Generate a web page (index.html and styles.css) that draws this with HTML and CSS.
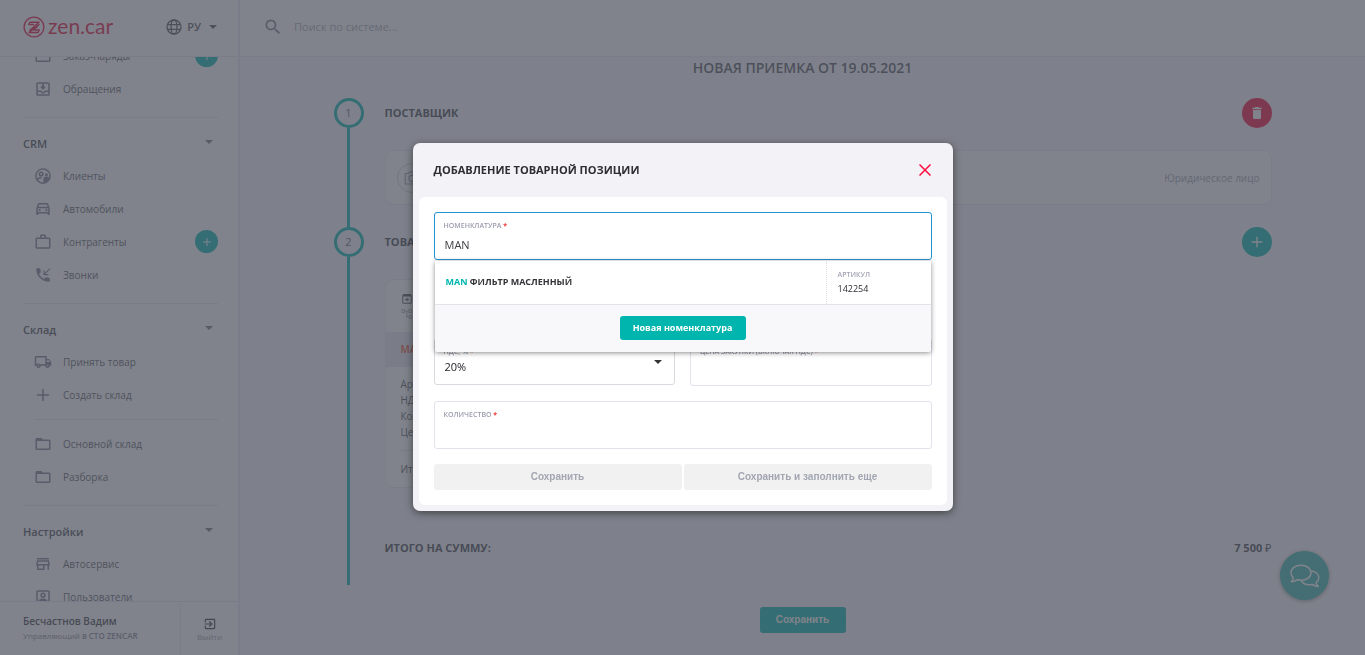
FILE: index.html
```html
<!DOCTYPE html>
<html lang="ru">
<head>
<meta charset="utf-8">
<title>Новая приемка — zen.car</title>
<meta name="viewport" content="width=device-width, initial-scale=1">
<link rel="stylesheet" href="styles.css">
</head>
<body>
<svg class="sprite" aria-hidden="true">
  <symbol id="i-orders" viewBox="0 0 24 24"><path d="M20 6h-8l-2-2H4a2 2 0 0 0-2 2v12a2 2 0 0 0 2 2h16a2 2 0 0 0 2-2V8a2 2 0 0 0-2-2zm0 12H4V8h16z"/></symbol>
  <symbol id="i-inbox" viewBox="0 0 24 24"><path d="M16 9h-2.500V5.500h-3V9H8l4 4 4-4zm3-6H5a2 2 0 0 0-2 2v14c0 1.100.9 2 2 2h14a2 2 0 0 0 2-2V5a2 2 0 0 0-2-2zm0 16H5v-3h3.560c.69 1.190 1.970 2 3.450 2s2.750-.81 3.450-2H19v3zm0-5h-4.990c0 1.100-.9 2-2 2s-2-.9-2-2H5V5h14v9z"/></symbol>
  <symbol id="i-clients" viewBox="0 0 24 24"><path fill-rule="evenodd" d="M12 1.500a10.500 10.500 0 1 0 0 21 10.500 10.500 0 0 0 0-21zM12 3.500a8.500 8.500 0 0 1 8.300 10.200c-1-.7-2.500-1-3.800-1-2.700 0-4 1.600-4 3v4.800A8.500 8.500 0 0 1 5 16.800c1-.8 2.600-1.300 4.200-1.300l1.800-1.800c-3-.3-5.500.3-7 1.300A8.500 8.500 0 0 1 12 3.500zM9.500 6a3.400 3.400 0 1 0 0 6.800 3.400 3.400 0 0 0 0-6.800zm0 2a1.400 1.400 0 1 1 0 2.800 1.400 1.400 0 0 1 0-2.800zm7 .3a2 2 0 1 0 0 4 2 2 0 0 0 0-4z"/></symbol>
  <symbol id="i-car" viewBox="0 0 24 24"><path d="M18.920 5.010C18.720 4.420 18.160 4 17.500 4h-11c-.66 0-1.210.42-1.420 1.010L3 11v8c0 .55.45 1 1 1h1c.55 0 1-.45 1-1v-1h12v1c0 .55.45 1 1 1h1c.55 0 1-.45 1-1v-8l-2.080-5.990zM6.850 6h10.290l1.080 3.110H5.770L6.850 6zM19 16H5v-5h14v5z"/><circle cx="7.500" cy="13.500" r="1.500"/><circle cx="16.500" cy="13.500" r="1.500"/></symbol>
  <symbol id="i-case" viewBox="0 0 24 24"><path d="M14 6V4h-4v2h4zM4 8v11h16V8H4zm16-2c1.110 0 2 .89 2 2v11c0 1.110-.89 2-2 2H4c-1.110 0-2-.89-2-2V8c0-1.110.89-2 2-2h4V4c0-1.110.89-2 2-2h4c1.110 0 2 .89 2 2v2h4z"/></symbol>
  <symbol id="i-call" viewBox="0 0 24 24"><path d="M20 15.500c-1.250 0-2.450-.2-3.570-.57a1.020 1.020 0 0 0-1.020.24l-2.200 2.200a15.070 15.070 0 0 1-6.590-6.580l2.200-2.210c.28-.27.36-.66.25-1.010A11.360 11.360 0 0 1 8.500 4c0-.55-.45-1-1-1H4c-.55 0-1 .45-1 1 0 9.390 7.610 17 17 17 .55 0 1-.45 1-1v-3.500c0-.55-.45-1-1-1zM20.600 3l-6.600 6.600V5.500h-1.500v6.700h6.700v-1.500h-4.100L21.700 4z"/></symbol>
  <symbol id="i-truck" viewBox="0 0 24 24"><path d="M20 8h-3V4H3c-1.100 0-2 .9-2 2v11h2c0 1.660 1.340 3 3 3s3-1.340 3-3h6c0 1.660 1.340 3 3 3s3-1.340 3-3h2v-5l-3-4zm-.5 1.500l1.960 2.500H17V9.500h2.500zM6 18c-.55 0-1-.45-1-1s.45-1 1-1 1 .45 1 1-.45 1-1 1zm2.220-3c-.55-.61-1.330-1-2.220-1s-1.670.39-2.220 1H3V6h12v9H8.220zM18 18c-.55 0-1-.45-1-1s.45-1 1-1 1 .45 1 1-.45 1-1 1z"/></symbol>
  <symbol id="i-plus" viewBox="0 0 24 24"><path d="M20 13h-7v7h-2v-7H4v-2h7V4h2v7h7z"/></symbol>
  <symbol id="i-store" viewBox="0 0 24 24"><path d="M18.360 9l.6 3H5.040l.6-3h12.720M20 4H4v2h16V4zm0 3H4l-1 5v2h1v6h10v-6h4v6h2v-6h1v-2l-1-5zM6 18v-4h6v4H6z"/></symbol>
  <symbol id="i-user" viewBox="0 0 24 24"><path d="M19 3H5a2 2 0 0 0-2 2v14a2 2 0 0 0 2 2h14a2 2 0 0 0 2-2V5a2 2 0 0 0-2-2zm0 16H5V5h14zM12 6a3.500 3.500 0 1 0 0 7 3.500 3.500 0 0 0 0-7zm0 2a1.500 1.500 0 1 1 0 3 1.500 1.500 0 0 1 0-3zm0 6c-3 0-6 1.300-6 3.400V18h12v-.6c0-2.100-3-3.400-6-3.400z"/></symbol>
  <symbol id="i-exit" viewBox="0 0 24 24"><path d="M10.090 15.590L11.500 17l5-5-5-5-1.410 1.410L12.670 11H3v2h9.670l-2.580 2.590zM19 3H5a2 2 0 0 0-2 2v4h2V5h14v14H5v-4H3v4a2 2 0 0 0 2 2h14c1.100 0 2-.9 2-2V5c0-1.100-.9-2-2-2z"/></symbol>
  <symbol id="i-globe" viewBox="0 0 24 24"><g fill="none" stroke="currentColor" stroke-width="2"><circle cx="12" cy="12" r="10.500"/><ellipse cx="12" cy="12" rx="4.500" ry="10.500"/><path d="M2.500 8.500h19M2.500 15.500h19"/></g></symbol>
  <symbol id="i-search" viewBox="0 0 24 24"><path d="M15.500 14h-.79l-.28-.27A6.470 6.470 0 0 0 16 9.500 6.500 6.500 0 1 0 9.500 16c1.610 0 3.090-.59 4.230-1.570l.27.28v.79l5 4.990L20.490 19l-4.990-5zm-6 0C7.010 14 5 11.990 5 9.500S7.010 5 9.500 5 14 7.010 14 9.500 11.990 14 9.500 14z"/></symbol>
  <symbol id="i-trash" viewBox="0 0 24 24"><path d="M6 19c0 1.100.9 2 2 2h8c1.100 0 2-.9 2-2V7H6v12zM19 4h-3.500l-1-1h-5l-1 1H5v2h14V4z"/></symbol>
  <symbol id="i-camera" viewBox="0 0 24 24"><path fill="none" stroke="currentColor" stroke-width="1.600" d="M3 6h4l2-2h6l2 2h4v14H3zM12 8.500a4.200 4.200 0 1 0 0 8.400 4.200 4.200 0 0 0 0-8.400z"/></symbol>
  <symbol id="i-archive" viewBox="0 0 24 24"><path fill-rule="evenodd" d="M5 2h14l2.500 3v14a2.500 2.500 0 0 1-2.500 2.500H5A2.500 2.500 0 0 1 2.500 19V5zm-.5 5v12.500h15V7zM11 9h2v3h3v2h-3v3h-2v-3H8v-2h3z"/></symbol>
  <symbol id="i-tree" viewBox="0 0 24 24"><path fill="none" stroke="currentColor" stroke-width="1.600" d="M2 3h5v6H2zM16 3h5v6h-5zM16 15h5v6h-5zM7 6h9M11.500 6v12H16"/></symbol>
</svg>

<div class="app">
  <aside class="sidebar">
    <div class="brand">
      <a class="logo" href="#">
        <svg class="logo-mark" viewBox="0 0 24 24"><g fill="none" stroke="currentColor" stroke-width="1.500" stroke-linejoin="round" stroke-linecap="round"><circle cx="12" cy="12" r="10.800"/><path d="M7.500 6.800h10L7.500 15.500M7.500 6.800L6.300 9.300h5.200M17.500 9.200L6.500 18h10l1.300-2.700h-5M11 15.300l4.500-3.600"/></g></svg>
        <span>zen.car</span>
      </a>
      <button class="lang" type="button"><svg class="icon"><use href="#i-globe"/></svg>РУ<span class="caret"></span></button>
    </div>
    <nav class="menu">
      <div class="menu-scroll">
        <section class="group group-first">
          <a class="item" href="#"><svg class="icon"><use href="#i-orders"/></svg><span>Заказ-наряды</span><span class="add"><svg class="icon"><use href="#i-plus"/></svg></span></a>
          <a class="item" href="#"><svg class="icon"><use href="#i-inbox"/></svg><span>Обращения</span></a>
        </section>
        <section class="group">
          <h2 class="group-title">CRM<span class="caret"></span></h2>
          <a class="item" href="#"><svg class="icon"><use href="#i-clients"/></svg><span>Клиенты</span></a>
          <a class="item" href="#"><svg class="icon"><use href="#i-car"/></svg><span>Автомобили</span></a>
          <a class="item" href="#"><svg class="icon"><use href="#i-case"/></svg><span>Контрагенты</span><span class="add"><svg class="icon"><use href="#i-plus"/></svg></span></a>
          <a class="item" href="#"><svg class="icon"><use href="#i-call"/></svg><span>Звонки</span></a>
        </section>
        <section class="group">
          <h2 class="group-title">Склад<span class="caret"></span></h2>
          <a class="item" href="#"><svg class="icon"><use href="#i-truck"/></svg><span>Принять товар</span></a>
          <a class="item" href="#"><svg class="icon"><use href="#i-plus"/></svg><span>Создать склад</span></a>
          <hr class="subline">
          <a class="item" href="#"><svg class="icon"><use href="#i-orders"/></svg><span>Основной склад</span></a>
          <a class="item" href="#"><svg class="icon"><use href="#i-orders"/></svg><span>Разборка</span></a>
        </section>
        <section class="group">
          <h2 class="group-title">Настройки<span class="caret"></span></h2>
          <a class="item" href="#"><svg class="icon"><use href="#i-store"/></svg><span>Автосервис</span></a>
          <a class="item" href="#"><svg class="icon"><use href="#i-user"/></svg><span>Пользователи</span></a>
        </section>
      </div>
    </nav>
    <footer class="account">
      <div class="account-info"><strong>Бесчастнов Вадим</strong><span>Управляющий <b>в СТО ZENCAR</b></span></div>
      <button class="logout" type="button"><svg class="icon"><use href="#i-exit"/></svg>Выйти</button>
    </footer>
  </aside>

  <div class="page">
    <header class="topbar">
      <svg class="icon"><use href="#i-search"/></svg>
      <input class="search" type="search" placeholder="Поиск по системе..." aria-label="Поиск по системе">
    </header>
    <main class="main">
      <div class="receipt">
        <h1 class="receipt-title">НОВАЯ ПРИЕМКА ОТ 19.05.2021</h1>
        <section class="step">
          <div class="marker"><span class="dot">1</span></div>
          <div class="step-body">
            <div class="step-head"><h2>ПОСТАВЩИК</h2><button class="round danger" type="button" aria-label="Удалить"><svg class="icon"><use href="#i-trash"/></svg></button></div>
            <div class="supplier"><span class="avatar"><svg class="icon"><use href="#i-camera"/></svg></span><span>Юридическое лицо</span></div>
          </div>
        </section>
        <section class="step">
          <div class="marker"><span class="dot">2</span></div>
          <div class="step-body">
            <div class="step-head"><h2>ТОВАРЫ</h2><button class="round" type="button" aria-label="Добавить"><svg class="icon"><use href="#i-plus"/></svg></button></div>
            <article class="product">
              <div class="product-head"><svg class="icon"><use href="#i-archive"/></svg><svg class="icon light"><use href="#i-tree"/></svg></div>
              <h3>MAN</h3>
              <ul><li>Артикул</li><li>НДС</li><li>Кол-во</li><li>Цена</li></ul>
              <p>Итого</p>
            </article>
            <div class="total"><span>ИТОГО НА СУММУ:</span><span>7 500 <span class="currency">₽</span></span></div>
          </div>
        </section>
        <button class="btn save" type="button">Сохранить</button>
      </div>
    </main>
  </div>
</div>

<button class="chat" type="button" aria-label="Чат"><svg viewBox="0 0 30 24"><g fill="none" stroke="currentColor" stroke-width="1.500" stroke-linejoin="round"><path d="M11 1.200c5.600 0 10 3.300 10 7.500s-4.400 7.500-10 7.500c-1.300 0-2.600-.2-3.700-.5-1.600 1.300-3.600 2-6 2 1.200-1.200 1.900-2.400 2-3.900A7 7 0 0 1 1 8.700c0-4.200 4.400-7.500 10-7.500z"/><path d="M21.300 7c4.300.6 7.500 3.200 7.500 6.500 0 2-1 3.800-2.700 5 .1 1.400.9 2.600 2.100 3.900-2.300 0-4.300-.7-5.900-2-4.700 1-9.300-.4-11.300-4"/></g></svg></button>

<div class="overlay">
  <div class="modal" role="dialog" aria-labelledby="modal-title">
    <header class="modal-head">
      <h2 id="modal-title">ДОБАВЛЕНИЕ ТОВАРНОЙ ПОЗИЦИИ</h2>
      <button class="close" type="button" aria-label="Закрыть"><svg viewBox="0 0 12 12"><path d="M.5.5l11 11M11.500.5l-11 11" fill="none" stroke="currentColor" stroke-width="1.500"/></svg></button>
    </header>
    <form class="modal-body">
      <div class="field active">
        <label for="item">НОМЕНКЛАТУРА <i>*</i></label>
        <input id="item" type="text" value="MAN">
        <div class="suggest">
          <div class="option">
            <div class="option-name"><mark>MAN</mark> ФИЛЬТР МАСЛЕННЫЙ</div>
            <div class="option-code"><small>АРТИКУЛ</small><span>142254</span></div>
          </div>
          <div class="suggest-foot"><button class="btn new-item" type="button">Новая номенклатура</button></div>
        </div>
      </div>
      <div class="field blank"></div>
      <div class="pair">
        <div class="field select">
          <label for="vat">НДС, % <i>*</i></label>
          <select id="vat"><option>20%</option></select>
        </div>
        <div class="field">
          <label for="price">ЦЕНА ЗАКУПКИ (ВКЛЮЧАЯ НДС) <i>*</i></label>
          <input id="price" type="text">
        </div>
      </div>
      <div class="field">
        <label for="qty">КОЛИЧЕСТВО <i>*</i></label>
        <input id="qty" type="text">
      </div>
      <div class="actions"><button type="submit" disabled>Сохранить</button><button type="button" disabled>Сохранить и заполнить еще</button></div>
    </form>
  </div>
</div>
</body>
</html>
```
FILE: styles.css
```css
* { box-sizing: border-box; }

body {
  margin: 0;
  height: 100vh;
  overflow: hidden;
  background: #fff;
  color: #2b2b33;
  font: 11px/16px "Open Sans", "Noto Sans", sans-serif;
}

h1, h2, h3, p, ul { margin: 0; padding: 0; font-size: inherit; }
ul { list-style: none; }
a { color: inherit; text-decoration: none; }
button, input, select { font: inherit; color: inherit; border: 0; background: none; padding: 0; margin: 0; outline: 0; }

.sprite { position: absolute; width: 0; height: 0; }
.icon { width: 18px; height: 18px; flex: none; fill: currentColor; }
.caret { width: 0; height: 0; border: 4px solid transparent; border-top-color: currentColor; border-bottom: 0; }

.app { display: flex; height: 100vh; }

/* Sidebar */
.sidebar {
  display: flex;
  flex-direction: column;
  flex: none;
  width: 240px;
  border-right: 2px solid #ebebf8;
}
.brand {
  display: flex;
  align-items: center;
  justify-content: space-between;
  flex: none;
  height: 57px;
  padding: 0 21px 3px 23px;
  border-bottom: 1px solid #ececf6;
}
.logo { display: flex; align-items: center; gap: 3px; color: #e8103f; font: 21px/24px Lato, sans-serif; }
.logo-mark { width: 22px; height: 22px; }
.logo span { padding-bottom: 2px; }
.lang { display: flex; align-items: center; gap: 5px; font-weight: 600; font-size: 11px; color: #55565f; }
.lang .icon { width: 16px; height: 16px; }
.lang .caret { margin-left: 3px; }
.menu { flex: 1; min-height: 0; overflow: hidden; }
.menu-scroll { margin-top: -18px; }
.group { margin: 0 20px 0 23px; padding-bottom: 12px; border-top: 1px solid #e6e6f5; color: #5b5c68; }
.group-first { border-top: 0; }
.group-title {
  display: flex;
  align-items: center;
  justify-content: space-between;
  height: 41px;
  padding: 10px 5px 0 0;
  font-size: 11px;
  font-weight: 600;
  color: #484954;
}
.group-title .caret { margin-bottom: 3px; color: #777887; }
.item { display: flex; align-items: center; height: 33px; padding-left: 11px; font-size: 10px; }
.item > .icon { margin-right: 11px; color: #7d7e8f; }
.add {
  display: grid;
  place-items: center;
  width: 23px;
  height: 23px;
  margin-left: auto;
  border-radius: 50%;
  background: #00b5ad;
  color: #fff;
}
.add .icon { width: 12px; height: 12px; }
.subline { height: 1px; margin: 8px 0 7px 11px; border: 0; background: #e6e6f5; }
.account { display: flex; flex: none; height: 54px; border-top: 1px solid #e6e6f5; }
.account-info { flex: 1; padding: 11px 0 0 23px; font-size: 8px; line-height: 13px; color: #85869a; }
.account-info strong, .account-info span { display: block; }
.account-info strong { font-size: 10px; line-height: 16px; font-weight: 600; color: #3f4049; }
.account-info b { font-weight: 600; }
.logout {
  display: flex;
  flex-direction: column;
  align-items: center;
  justify-content: center;
  width: 58px;
  padding-top: 2px;
  border-left: 1px dotted #dcdcea;
  font-size: 8px;
  line-height: 12px;
  color: #9a9bac;
}
.logout .icon { width: 14px; height: 14px; color: #33343c; }

/* Top bar */
.page { display: flex; flex-direction: column; flex: 1; min-width: 0; }
.topbar {
  display: flex;
  align-items: center;
  gap: 11px;
  flex: none;
  height: 57px;
  padding: 0 23px 3px;
  border-bottom: 1px solid #ececf6;
}
.topbar .icon { width: 20px; height: 20px; color: #7d7e8f; }
.search { flex: 1; font-size: 11px; }
.search::placeholder { color: #a9aab8; opacity: 1; }

/* Receipt */
.main { flex: 1; min-height: 0; overflow: hidden; padding: 0 40px; background: #f9f9fd; }
.receipt { display: flex; flex-direction: column; max-width: 938px; margin: 0 auto; }
.receipt-title { height: 41px; line-height: 22px; font-size: 14px; font-weight: 600; text-align: center; color: #55565f; }
.step { display: flex; gap: 21px; }
.marker { display: flex; flex-direction: column; align-items: center; flex: none; width: 30px; }
.marker::after { content: ""; flex: 1; width: 3px; background: #00b5ad; }
.dot { display: grid; place-items: center; width: 30px; height: 30px; border: 3px solid #00b5ad; border-radius: 50%; color: #666774; }
.step-body { flex: 1; min-width: 0; padding-bottom: 22px; }
.step-head { display: flex; align-items: center; justify-content: space-between; height: 30px; margin-bottom: 22px; color: #44454f; }
.step-head h2 { font-weight: 700; }
.round { display: grid; place-items: center; width: 30px; height: 30px; border-radius: 50%; background: #00b5ad; color: #fff; }
.round .icon { width: 16px; height: 16px; }
.danger { background: #f5083a; }
.supplier {
  display: flex;
  align-items: center;
  justify-content: space-between;
  height: 55px;
  padding: 0 11px;
  border: 1px solid #e9e9f6;
  border-radius: 8px;
  background: #fff;
  font-size: 10px;
  color: #a0a1b4;
}
.avatar { display: grid; place-items: center; width: 30px; height: 30px; border: 1px solid #cfd0de; border-radius: 50%; }
.product { width: 280px; border: 1px solid #e9e9f6; border-radius: 8px; background: #fff; font-size: 10px; color: #55565f; }
.product-head { display: flex; flex-direction: column; gap: 3px; padding: 13px 15px 12px; }
.product-head .icon { width: 12px; height: 12px; }
.product-head .light { color: #9a9bac; }
.product h3 { padding: 0 15px; line-height: 35px; background: #e9e9f4; color: #f05030; font-weight: 600; }
.product ul { margin: 0 15px; padding: 9px 0 10px; border-bottom: 1px solid #e6e6f0; }
.product p { padding: 10px 15px; }
.total { display: flex; justify-content: space-between; padding: 52px 0 7px; font-weight: 700; color: #44454f; }
.currency { font-weight: 400; }
.btn { border-radius: 3px; background: #00b5ad; color: #fff; font-weight: 700; }
.save { align-self: center; width: 86px; height: 26px; margin-top: 22px; font-family: "Liberation Sans", Arial, sans-serif; font-size: 10px; }

.chat {
  position: fixed;
  right: 36px;
  bottom: 55px;
  display: grid;
  place-items: center;
  width: 49px;
  height: 49px;
  border-radius: 50%;
  background: #38b8b0;
  color: #fff;
  box-shadow: 0 1px 4px rgba(0, 0, 0, 0.4);
}
.chat svg { width: 30px; height: 24px; }

/* Modal */
.overlay { position: fixed; inset: 0; display: grid; place-items: center; padding-bottom: 2px; background: rgba(74, 78, 90, 0.7); }
.modal { width: 540px; padding: 0 6px 6px; border-radius: 7px; background: #f3f2f7; box-shadow: 0 2px 8px rgba(0, 0, 0, 0.5); }
.modal-head { display: flex; align-items: center; justify-content: space-between; height: 54px; padding: 0 15px; }
.modal-head h2 { font-weight: 700; color: #2d2d33; }
.close { display: grid; place-items: center; width: 14px; height: 14px; color: #ff0a3c; }
.close svg { width: 12px; height: 12px; }
.modal-body { display: grid; gap: 15px; padding: 15px; border-radius: 6px; background: #fff; }
.pair { display: grid; grid-template-columns: 1fr 1fr; gap: 15px; }
.field { position: relative; display: flex; flex-direction: column; height: 48px; padding: 7px 9px; border: 1px solid #e2e1ee; border-radius: 3px; }
.field label { font-size: 7px; line-height: 12px; font-weight: 600; color: #9b9cad; }
.field i { font-style: normal; font-weight: 700; color: #f03535; }
.field input, .field select { width: 100%; height: 20px; margin-top: 3px; padding-left: 1px; line-height: 20px; color: #3c3c42; }
.field select { height: 16px; margin-top: 1px; line-height: 16px; appearance: none; color: #222228; }
.active { border-color: #2493d1; }
.blank { border-color: transparent; }
.select { height: 47px; border-color: #d9d9df; }
.select::after { content: ""; position: absolute; top: 21px; right: 12px; border: 4px solid transparent; border-top-color: #333; border-bottom: 0; }
.suggest {
  position: absolute;
  z-index: 2;
  top: 48px;
  left: 0;
  right: 0;
  border-radius: 0 0 3px 3px;
  background: #fff;
  box-shadow: 0 1px 5px rgba(0, 0, 0, 0.45);
}
.option { display: flex; height: 44px; border-bottom: 1px solid #e4e4e8; }
.option-name { flex: 1; padding-left: 11px; font-size: 9px; line-height: 41px; font-weight: 700; color: #333338; }
.option-name mark { background: none; color: #00b5ad; }
.option-code { display: flex; flex-direction: column; width: 105px; padding: 7px 0 0 11px; border-left: 1px dotted #dcdce2; font-size: 9px; line-height: 14px; }
.option-code small { font-size: 7px; font-weight: 600; color: #a3a4b4; }
.suggest-foot { display: grid; place-items: center; height: 47px; border-radius: 0 0 3px 3px; background: #f8f8fb; }
.new-item { width: 126px; height: 24px; font-size: 9px; }
.actions { display: grid; grid-template-columns: 1fr 1fr; gap: 2px; }
.actions button { height: 26px; border-radius: 3px; background: #f1f1f1; color: #a3a6b2; font: 700 10px/26px "Liberation Sans", Arial, sans-serif; }
```
